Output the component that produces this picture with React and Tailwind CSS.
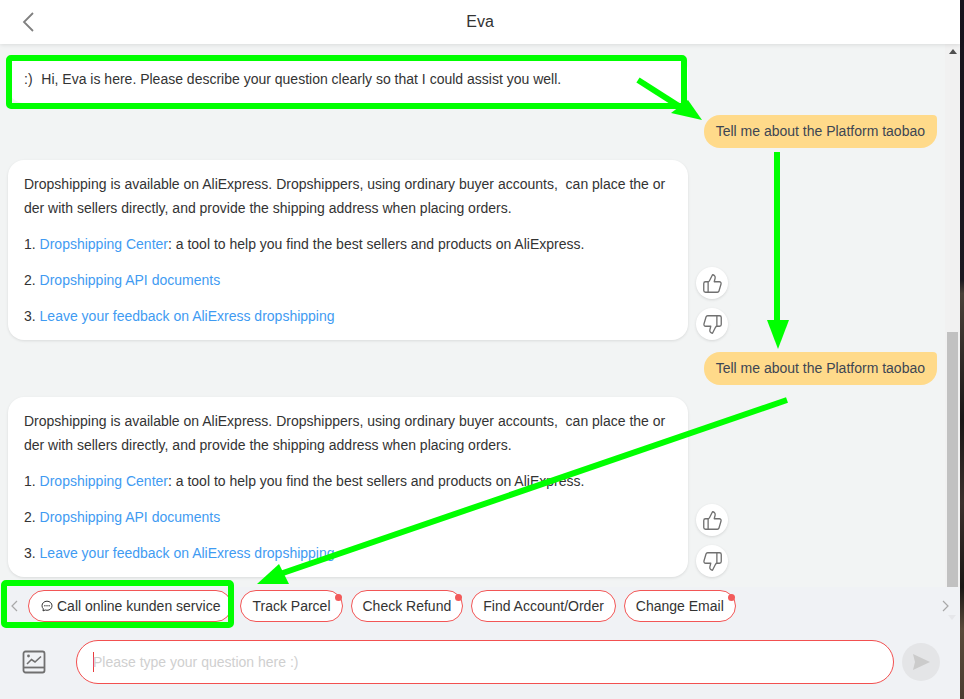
import React from "react";
import { ThumbsUp, ThumbsDown } from "lucide-react";

const chips = [
  { label: "Track Parcel", dot: true },
  { label: "Check Refund", dot: true },
  { label: "Find Account/Order", dot: false },
  { label: "Change Email", dot: true },
];

function AnswerCard() {
  return (
    <div className="flex items-end">
      <div className="ml-2 w-[680px] rounded-2xl bg-white px-4 py-3 text-sm leading-6 text-[#333] shadow-[0_1px_3px_rgba(0,0,0,0.1)]">
        <p className="break-all">
          Dropshipping is available on AliExpress. Dropshippers, using ordinary buyer accounts,&nbsp; can place the order with sellers directly, and provide the shipping address when placing orders.
        </p>
        <p className="mt-3">
          1. <a className="text-[#3f9bf2]">Dropshipping Center</a>: a tool to help you find the best sellers and products on AliExpress.
        </p>
        <p className="mt-3">
          2. <a className="text-[#3f9bf2]">Dropshipping API documents</a>
        </p>
        <p className="mt-3">
          3. <a className="text-[#3f9bf2]">Leave your feedback on AliExress dropshipping</a>
        </p>
      </div>
      <div className="ml-2 flex flex-col gap-[9px]">
        <button className="flex h-8 w-8 items-center justify-center rounded-full bg-white shadow-[0_1px_3px_rgba(0,0,0,0.12)]">
          <ThumbsUp size={21} strokeWidth={1.5} className="ml-px text-[#707070]" />
        </button>
        <button className="flex h-8 w-8 items-center justify-center rounded-full bg-white shadow-[0_1px_3px_rgba(0,0,0,0.12)]">
          <ThumbsDown size={21} strokeWidth={1.5} className="ml-px text-[#707070]" />
        </button>
      </div>
    </div>
  );
}

function Bubble() {
  return (
    <div className="mr-2 self-end rounded-tl-2xl rounded-tr-[4px] rounded-br-2xl rounded-bl-2xl bg-[#ffda8a] px-3 text-sm leading-[33px] text-[#3d4653]">
      Tell me about the Platform taobao
    </div>
  );
}

export default function App() {
  return (
    <div className="relative flex h-[699px] w-[964px] overflow-hidden font-['Liberation_Sans',Arial,sans-serif]">
      <div className="flex h-full w-[960px] flex-col bg-[#f0f2f5]">
        {/* Header */}
        <div className="relative z-10 flex h-11 shrink-0 items-center bg-white shadow-[0_1px_4px_rgba(0,0,0,0.1)]">
          <svg width="14" height="22" viewBox="0 0 14 22" fill="none" className="ml-[21px]">
            <path d="M12 2 L3 11 L12 20" stroke="#808080" strokeWidth="1.8" />
          </svg>
          <div className="flex-1 pr-[35px] text-center text-base text-[#333]">Eva</div>
        </div>

        {/* Messages */}
        <div className="flex h-[543px] shrink-0 overflow-hidden bg-[#f2f4f4]">
          <div className="flex flex-1 flex-col gap-3 pt-[11px]">
            <div className="ml-2 w-[680px] rounded-2xl bg-white px-4 py-3 text-sm leading-6 text-[#333]">
              <span className="mr-px">:)&nbsp;</span> Hi, Eva is here. Please describe your question clearly so that I could assist you well.
            </div>
            <Bubble />
            <AnswerCard />
            <Bubble />
            <AnswerCard />
          </div>
          {/* Scrollbar */}
          <div className="flex w-[15px] flex-col items-center bg-[#f1f1f1]">
            <svg width="8" height="5" viewBox="0 0 8 5" className="mt-[5px]">
              <path d="M4 0 L8 5 L0 5 Z" fill="#505050" />
            </svg>
            <div className="mt-auto h-[255px] w-[11px] bg-[#c1c1c1]" />
          </div>
        </div>

        {/* Shortcuts */}
        <div className="flex h-[38px] shrink-0 items-center pt-[3px] pb-[3px]">
          <svg width="8" height="12" viewBox="0 0 8 12" fill="none" className="mr-[10px] ml-[10px]">
            <path d="M7 1 L2 6 L7 11" stroke="#a8a8a8" strokeWidth="1.2" />
          </svg>
          <div className="flex gap-2">
            <button className="flex h-8 items-center gap-1 rounded-full border border-[#f25656] bg-white pr-[11px] pl-3 text-sm text-[#333]">
              <svg width="12" height="12" viewBox="0 0 12 12" fill="none">
                <path d="M6 1.2 C8.9 1.2 11 3.2 11 5.8 C11 8.4 8.9 10.3 6 10.3 C5.4 10.3 4.8 10.2 4.2 10 L2 10.9 L2.3 8.8 C1.5 8 1 7 1 5.8 C1 3.2 3.1 1.2 6 1.2 Z" stroke="#333" strokeWidth="1" />
                <circle cx="3.9" cy="5.8" r="0.7" fill="#333" />
                <circle cx="6" cy="5.8" r="0.7" fill="#333" />
                <circle cx="8.1" cy="5.8" r="0.7" fill="#333" />
              </svg>
              Call online kunden service
            </button>
            {chips.map((chip) => (
              <button
                key={chip.label}
                className="relative h-8 rounded-full border border-[#f25656] bg-white px-[11px] text-sm text-[#333]"
              >
                {chip.label}
                {chip.dot && (
                  <span className="absolute top-[3px] right-0 h-[7px] w-[7px] rounded-full bg-[#f25b5b]" />
                )}
              </button>
            ))}
          </div>
          <svg width="8" height="12" viewBox="0 0 8 12" fill="none" className="mr-[10px] ml-auto">
            <path d="M1 1 L6 6 L1 11" stroke="#a8a8a8" strokeWidth="1.2" />
          </svg>
        </div>

        {/* Input */}
        <div className="flex items-center pt-[15px]">
          <svg width="24" height="24" viewBox="0 0 24 24" fill="none" className="ml-[22px]">
            <rect x="1.5" y="1.5" width="21" height="21" rx="2" stroke="#707070" strokeWidth="1.8" />
            <path d="M1.5 17.5 H22.5" stroke="#707070" strokeWidth="1.8" />
            <path d="M5 14 L9.5 9.5 L13 12 L19 6.5" stroke="#707070" strokeWidth="1.6" />
            <circle cx="6.5" cy="6" r="1.4" fill="#707070" />
          </svg>
          <div className="ml-[30px] flex h-11 w-[818px] items-center rounded-[22px] border border-[#f25050] bg-white pl-4">
            <span className="-mr-px h-5 w-px bg-[#e83c3c]" />
            <input
              readOnly
              placeholder="Please type your question here :)"
              className="flex-1 bg-transparent text-sm text-[#333] outline-none placeholder:text-[#cfcfcf]"
            />
          </div>
          <button className="ml-2 flex h-[38px] w-[38px] items-center justify-center rounded-full bg-[#e4e5e7]">
            <svg width="17" height="16" viewBox="0 0 17 16">
              <path d="M0 0 L17 8 L0 16 L2 8 Z" fill="#cbcbcb" />
            </svg>
          </button>
        </div>
      </div>

      {/* Desktop behind the window */}
      <div className="h-full w-1 bg-[linear-gradient(to_bottom,#17131c_0%,#1c1820_40%,#4a4038_42%,#1a1616_60%,#3c302c_72%,#1a1614_84%,#5a4a3a_90%,#4a3c30_100%)]" />

      {/* Green annotations drawn on top of the screenshot */}
      <svg width="964" height="699" viewBox="0 0 964 699" fill="none" className="pointer-events-none absolute top-0 left-0 z-20">
        <path d="M948 615 L956 615 L952 620 Z" fill="#e6e7ea" />
        <rect x="9" y="58" width="675" height="48" rx="2" stroke="#00ff00" strokeWidth="6" />
        <rect x="4" y="583" width="227" height="42" rx="2" stroke="#00ff00" strokeWidth="6" />
        <path d="M638 80 L685 110" stroke="#00ff00" strokeWidth="6" />
        <path d="M702 120 L671 113 L688 100 Z" fill="#00ff00" />
        <path d="M777 152 L777 325" stroke="#00ff00" strokeWidth="6" />
        <path d="M778 349 L767 320 L789 320 Z" fill="#00ff00" />
        <path d="M787 400 L280 574" stroke="#00ff00" strokeWidth="6" />
        <path d="M257 584 L279 564 L289 584 Z" fill="#00ff00" />
      </svg>
    </div>
  );
}
